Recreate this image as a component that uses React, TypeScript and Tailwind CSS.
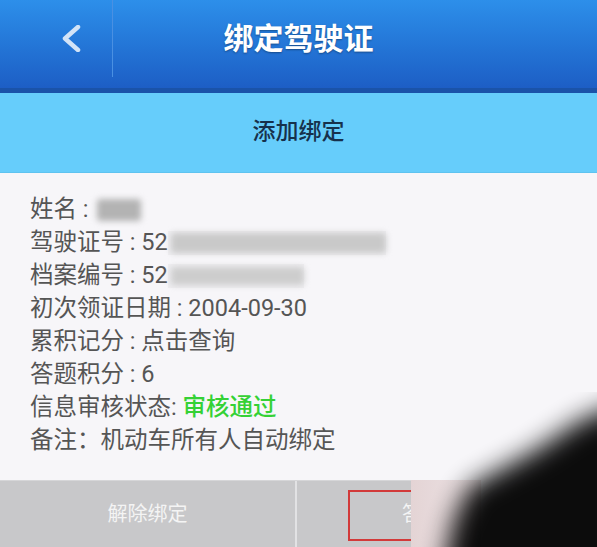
import React from "react"

const font = { fontFamily: 'Roboto, "Noto Sans CJK SC", sans-serif' }

function Blur({ w, tone = "#bdbdbd", pad = 2 }: { w: number; tone?: string; pad?: number }) {
  // 打码区域
  return (
    <span className="relative inline-block h-[24px] align-middle" style={{ width: w }}>
      <span className="absolute left-[3px] right-0 rounded-[3px] blur-[3px]" style={{ background: tone, top: pad, bottom: pad }} />
    </span>
  )
}

function Row({ label, children }: { label: string; children?: React.ReactNode }) {
  return (
    <div className="flex items-center h-[33px] whitespace-pre">
      <span>{label}</span>
      {children}
    </div>
  )
}

export default function App() {
  return (
    <div className="relative w-[597px] h-[547px] overflow-hidden bg-[#f7f6f9]" style={font}>
      {/* header */}
      <div className="h-[93px] bg-gradient-to-b from-[#2d8fea] to-[#1d5ec5] border-b-[5px] border-[#1a53a9] flex items-start">
        <div className="w-[113px] h-[77px] border-r border-[#4a90e2] flex items-center justify-end pr-[31px]">
          <svg width="20" height="27" viewBox="0 0 20 27">
            <polyline points="17,2 4,13.5 17,25" fill="none" stroke="#d2e3f7" strokeWidth="4.5" strokeLinecap="round" strokeLinejoin="round" />
          </svg>
        </div>
        <div className="flex-1 h-[77px] pr-[113px] flex items-center justify-center">
          <span className="text-[30px] font-bold text-white leading-none [text-shadow:0_1px_2px_rgba(0,0,0,0.35)]">绑定驾驶证</span>
        </div>
      </div>

      {/* sub bar */}
      <div className="h-[80px] bg-[#66cdfb] border-b border-[#5ec3f0] flex items-center justify-center">
        <span className="text-[23px] text-[#16314c] font-medium">添加绑定</span>
      </div>

      {/* info */}
      <div className="h-[307px] pt-[20px] pl-[30px] text-[23.5px] text-[#555555] leading-[33px]">
        <Row label="姓名 : ">
          <Blur w={47} tone="#b3b3b3" pad={1} />
        </Row>
        <Row label="驾驶证号 : 52">
          <span className="bg-[#efeef1] inline-flex">
            <Blur w={218} tone="#c9c9c9" pad={2} />
          </span>
        </Row>
        <Row label="档案编号 : 52">
          <span className="bg-[#efeef1] inline-flex">
            <Blur w={136} tone="#cdcdcd" pad={3} />
          </span>
        </Row>
        <Row label="初次领证日期 : 2004-09-30" />
        <Row label="累积记分 : 点击查询" />
        <Row label="答题积分 : 6" />
        <Row label="信息审核状态: ">
          <span className="text-[#35d135] font-medium">审核通过</span>
        </Row>
        <Row label="备注：机动车所有人自动绑定" />
      </div>

      {/* bottom buttons */}
      <div className="h-[67px] bg-[#c8c8ca] border-t border-[#d6d6d8] flex">
        <div className="w-[297px] border-r-2 border-[#e2e2e4] flex items-center justify-center">
          <span className="text-[20px] text-[#f4f4f4]">解除绑定</span>
        </div>
        <div className="flex-1 flex items-center justify-center">
          <span className="text-[20px] text-[#f4f4f4] pl-[10px]">答题获积分</span>
        </div>
      </div>

      {/* red annotation box */}
      <div className="absolute left-[348px] top-[490px] w-[120px] h-[51px] border-2 border-[#d23a3a]" />

      {/* watermark */}
      <div className="absolute left-[411px] top-[392px] w-[186px] h-[155px] bg-[#f7f6f9] overflow-hidden">
        <div className="absolute left-0 top-[88px] w-[70px] h-[67px] bg-gradient-to-r from-[#e4d4d5] to-[#ece3e5]" />
        <svg className="absolute inset-0" width="186" height="155" viewBox="0 0 186 155">
          <defs>
            <filter id="wm" x="-50%" y="-50%" width="200%" height="200%">
              <feGaussianBlur stdDeviation="13" />
            </filter>
          </defs>
          <polygon
            points="30,190 42,130 58,95 125,58 170,28 215,10 215,190"
            fill="#050505"
            opacity="0.95"
            filter="url(#wm)"
          />
        </svg>
      </div>
    </div>
  )
}
